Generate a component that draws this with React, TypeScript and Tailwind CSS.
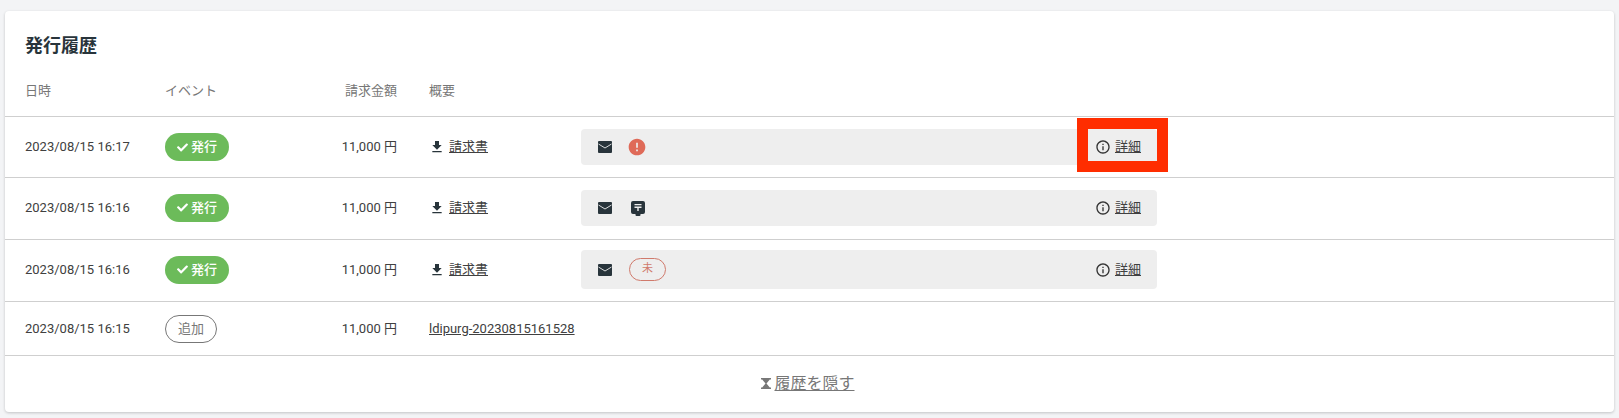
import { MdFileDownload, MdInfoOutline, MdError } from "react-icons/md";
import { FaCheck } from "react-icons/fa";

const font = { fontFamily: '"Roboto","Noto Sans CJK JP",sans-serif' };

function PostIcon() {
  return (
    <svg viewBox="0 0 14 15" className="w-[14px] h-[15px]">
      <path d="M2 0h10a2 2 0 0 1 2 2v9a2 2 0 0 1-2 2h-2.5v1a1 1 0 0 1-1 1h-3a1 1 0 0 1-1-1v-1H2a2 2 0 0 1-2-2V2a2 2 0 0 1 2-2z" fill="#28343b" />
      <path d="M3.5 3h7v1.3h-7zM3.5 5.6h7v1.3H7.7V10H6.3V6.9H3.5z" fill="#eeeeee" />
    </svg>
  );
}

function MailIcon() {
  return (
    <svg viewBox="0 0 14 12" className="w-[14px] h-[12px]">
      <rect width="14" height="12" rx="1" fill="#28343b" />
      <path d="M0.5 3 7 7l6.5-4" fill="none" stroke="#eeeeee" strokeWidth="0.9" />
    </svg>
  );
}

function Hourglass() {
  return (
    <svg viewBox="0 0 10 11" className="w-[10px] h-[11px]">
      <path d="M0 0h10v1.6H8.8L5.5 5.5l3.3 3.9H10V11H0V9.4h1.2l3.3-3.9-3.3-3.9H0z" fill="#777" />
    </svg>
  );
}

function Issued() {
  return (
    <span className="inline-flex items-center justify-center w-[64px] h-[28px] rounded-full bg-[#6cbb5a] text-white text-[13px] font-medium">
      <FaCheck className="w-[11px] h-[11px] mr-[3px]" />
      発行
    </span>
  );
}

function Row({ date, extra, h, panel }: { date: string; extra: React.ReactNode; h: string; panel: string }) {
  return (
    <div className={`flex items-center pl-[20px] border-b border-[#cfcfcf] ${h}`}>
      <div className="w-[140px] text-[13px] text-[#404040]">{date}</div>
      <div className="w-[100px]"><Issued /></div>
      <div className="w-[132px] text-right text-[13px] text-[#404040]">11,000 円</div>
      <a className="ml-[32px] w-[152px] flex items-center text-[13px] text-[#404040]">
        <MdFileDownload className="w-[16px] h-[16px] mr-[4px] text-[#28343b]" />
        <span className="underline">請求書</span>
      </a>
      <div className={`w-[576px] flex items-center justify-between rounded-[4px] bg-[#eeeeee] self-stretch pl-[17px] pr-[16px] ${panel}`}>
        <div className="flex items-center">
          <span className="w-[32px] flex"><MailIcon /></span>
          {extra}
        </div>
        <a className="flex items-center text-[13px] text-[#404040]">
          <MdInfoOutline className="w-[16px] h-[16px] mr-[4px] text-[#333]" />
          <span className="underline">詳細</span>
        </a>
      </div>
    </div>
  );
}

export default function App() {
  return (
    <div style={font} className="min-h-[418px] bg-[#f3f4f6] pt-[11px] px-[5px]">
      <div className="relative bg-white rounded-[4px] h-[401px] shadow-[0_1px_3px_rgba(0,0,0,0.2)]">
        <h2 className="pl-[20px] pt-[22px] h-[62px] text-[18px] font-bold text-[#28343b] leading-[26px]">発行履歴</h2>
        <div className="flex items-center pl-[20px] pb-[7px] h-[44px] border-b border-[#cfcfcf] text-[13px] text-[#777]">
          <div className="w-[140px]">日時</div>
          <div className="w-[100px]">イベント</div>
          <div className="w-[132px] text-right">請求金額</div>
          <div className="ml-[32px]">概要</div>
        </div>
        <Row h="h-[61px]" panel="my-[12px]" date="2023/08/15 16:17" extra={<MdError className="w-[20px] h-[20px] -ml-[3px] text-[#df6a58]" />} />
        <Row h="h-[62px] pb-[2px]" panel="mt-[12px] mb-[11px]" date="2023/08/15 16:16" extra={<span className="flex ml-[1px]"><PostIcon /></span>} />
        <Row h="h-[62px] pb-[2px]" panel="mt-[10px] mb-[10px]" date="2023/08/15 16:16" extra={
          <span className="flex items-center justify-center w-[37px] h-[23px] -ml-[1px] rounded-full border border-[#d07a6c] text-[#d07a6c] text-[11px]">未</span>
        } />
        <div className="flex items-center pl-[20px] border-b border-[#cfcfcf] h-[54px]">
          <div className="w-[140px] text-[13px] text-[#404040]">2023/08/15 16:15</div>
          <div className="w-[100px]">
            <span className="inline-flex items-center justify-center w-[52px] h-[28px] rounded-full border border-[#777] text-[#777] text-[13px]">追加</span>
          </div>
          <div className="w-[132px] text-right text-[13px] text-[#404040]">11,000 円</div>
          <a className="ml-[32px] text-[13px] text-[#404040] underline">ldipurg-20230815161528</a>
        </div>
        <div className="flex items-center justify-center h-[55px] pr-[3px] text-[16px] text-[#777]">
          <Hourglass />
          <a className="underline ml-[3px]">履歴を隠す</a>
        </div>
        <div className="absolute left-[1072px] top-[107px] w-[91px] h-[54px] border-[11px] border-[#ff2d00]" />
      </div>
    </div>
  );
}
